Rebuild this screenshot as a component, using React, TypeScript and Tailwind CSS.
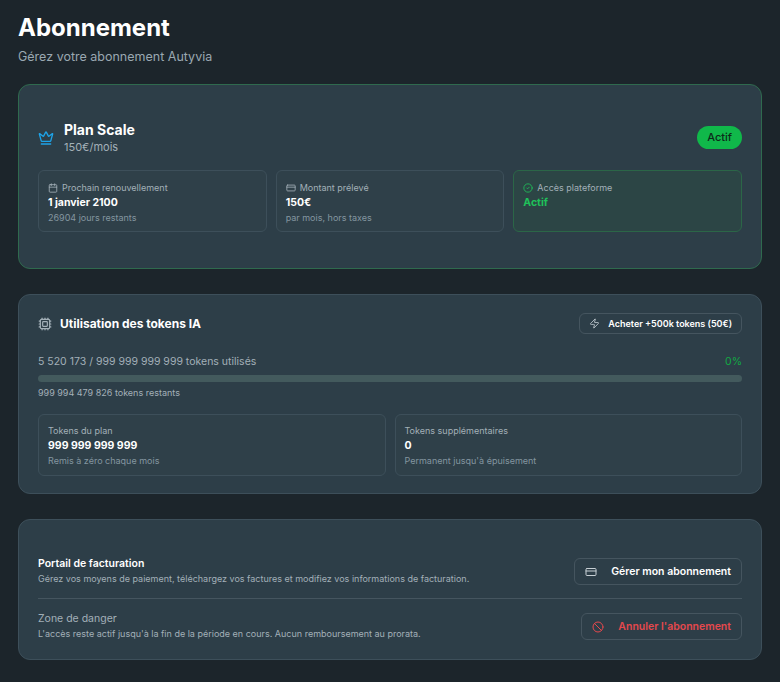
import { Crown, Calendar, CreditCard, CircleCheck, Cpu, Zap, Ban } from 'lucide-react';

const App = () => {
  return (
    <div className="min-h-screen bg-[#1c252b] px-[18px] pt-[14px] pb-4 text-white" style={{ fontFamily: 'Inter, "Noto Sans", sans-serif' }}>
      <h1 className="text-[24px] font-bold leading-[28px]">Abonnement</h1>
      <p className="mt-[7px] text-[12.5px] leading-[16px] text-[#9aa8b1]">Gérez votre abonnement Autyvia</p>

      <div className="mt-[19px] rounded-xl border border-[#2f6a4e] bg-[#2d3e48] px-[19px] pt-[36px] pb-[36px]">
        <div className="flex items-center justify-between">
          <div className="flex items-center gap-[10px]">
            <Crown className="h-[16px] w-[16px] text-[#1ea3e8]" strokeWidth={2} />
            <div>
              <div className="text-[14px] font-bold leading-[18px]">Plan Scale</div>
              <div className="mt-[1px] text-[11px] leading-[14px] text-[#a3b0b8]">150€/mois</div>
            </div>
          </div>
          <span className="rounded-full bg-[#10b84a] px-[10px] py-[3px] text-[11px] font-medium text-[#0d2b1a]">Actif</span>
        </div>
        <div className="mt-[16px] grid grid-cols-3 gap-[9px]">
          <div className="h-[62px] rounded-md border border-[#3d4f5a] bg-[#2f4049] px-[9px] pt-[9px] leading-[15px]">
            <div className="flex items-center gap-1 text-[9px] text-[#a3b0b8]"><Calendar className="h-[10px] w-[10px]" />Prochain renouvellement</div>
            <div className="text-[10.5px] font-bold">1 janvier 2100</div>
            <div className="text-[9px] text-[#8496a0]">26904 jours restants</div>
          </div>
          <div className="h-[62px] rounded-md border border-[#3d4f5a] bg-[#2f4049] px-[9px] pt-[9px] leading-[15px]">
            <div className="flex items-center gap-1 text-[9px] text-[#a3b0b8]"><CreditCard className="h-[10px] w-[10px]" />Montant prélevé</div>
            <div className="text-[10.5px] font-bold">150€</div>
            <div className="text-[9px] text-[#8496a0]">par mois, hors taxes</div>
          </div>
          <div className="h-[62px] rounded-md border border-[#2b6647] bg-[#2c4545] px-[9px] pt-[9px] leading-[15px]">
            <div className="flex items-center gap-1 text-[9px] text-[#a3b0b8]"><CircleCheck className="h-[10px] w-[10px] text-[#1fc25a]" />Accès plateforme</div>
            <div className="text-[10.5px] font-bold text-[#1fc25a]">Actif</div>
          </div>
        </div>
      </div>

      <div className="mt-[25px] rounded-xl border border-[#3d4f5a] bg-[#2d3e48] px-[19px] pt-[18px] pb-[17px]">
        <div className="flex items-center justify-between">
          <div className="flex items-center gap-[8px]">
            <Cpu className="h-[14px] w-[14px] text-[#a3b0b8]" />
            <span className="text-[12px] font-bold">Utilisation des tokens IA</span>
          </div>
          <button className="flex h-[21px] items-center gap-[8px] rounded-md border border-[#45555f] px-[9px] text-[9px] font-semibold">
            <Zap className="h-[11px] w-[11px] text-[#b8c2c8]" />Acheter +500k tokens (50€)
          </button>
        </div>
        <div className="mt-[21px] flex items-center justify-between text-[10.5px] leading-[14px]">
          <span className="text-[#a3b0b8]">5 520 173 / 999 999 999 999 tokens utilisés</span>
          <span className="text-[#12a844]">0%</span>
        </div>
        <div className="mt-[6px] h-[7px] rounded-full bg-[#435a5d]" />
        <div className="mt-[5px] text-[9px] leading-[12px] text-[#a3b0b8]">999 994 479 826 tokens restants</div>
        <div className="mt-[15px] grid grid-cols-2 gap-[9px]">
          <div className="h-[62px] rounded-md border border-[#3d4f5a] bg-[#2f4049] px-[9px] pt-[8px] leading-[15px]">
            <div className="text-[9px] text-[#a3b0b8]">Tokens du plan</div>
            <div className="text-[10.5px] font-bold">999 999 999 999</div>
            <div className="text-[9px] text-[#8496a0]">Remis à zéro chaque mois</div>
          </div>
          <div className="h-[62px] rounded-md border border-[#3d4f5a] bg-[#2f4049] px-[9px] pt-[8px] leading-[15px]">
            <div className="text-[9px] text-[#a3b0b8]">Tokens supplémentaires</div>
            <div className="text-[10.5px] font-bold">0</div>
            <div className="text-[9px] text-[#8496a0]">Permanent jusqu'à épuisement</div>
          </div>
        </div>
      </div>

      <div className="mt-[25px] rounded-xl border border-[#3d4f5a] bg-[#2d3e48] px-[19px] pt-[37px] pb-[18px]">
        <div className="flex items-center justify-between pb-[12px] border-b border-[#45555f]">
          <div className="leading-[14px]">
            <div className="text-[10.5px] font-semibold">Portail de facturation</div>
            <div className="mt-[1px] text-[9px] text-[#a3b0b8]">Gérez vos moyens de paiement, téléchargez vos factures et modifiez vos informations de facturation.</div>
          </div>
          <button className="flex h-[27px] items-center gap-[14px] rounded-md border border-[#45555f] px-[10px] text-[10.5px] font-semibold">
            <CreditCard className="h-[12px] w-[12px] text-[#c8d0d5]" />Gérer mon abonnement
          </button>
        </div>
        <div className="flex items-center justify-between pt-[13px]">
          <div className="leading-[14px]">
            <div className="text-[10.5px] text-[#a3b0b8]">Zone de danger</div>
            <div className="mt-[1px] text-[9px] text-[#a3b0b8]">L'accès reste actif jusqu'à la fin de la période en cours. Aucun remboursement au prorata.</div>
          </div>
          <button className="flex h-[27px] items-center gap-[14px] rounded-md border border-[#45555f] px-[10px] text-[10.5px] font-semibold text-[#e5484d]">
            <Ban className="h-[12px] w-[12px]" />Annuler l'abonnement
          </button>
        </div>
      </div>
    </div>
  );
};

export default App;
